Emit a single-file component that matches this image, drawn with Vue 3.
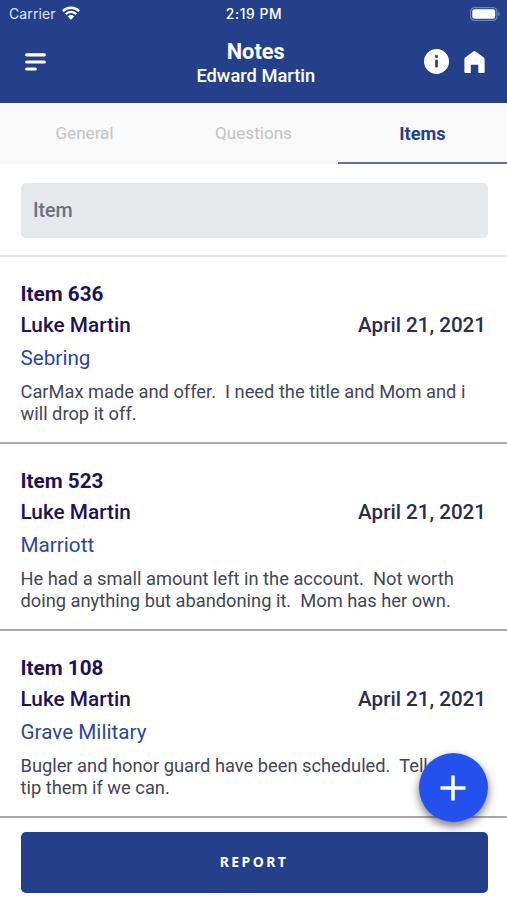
<script setup>
import { ref } from 'vue'

const tabs = ['General', 'Questions', 'Items']
const active = ref('Items')
const notes = [
  { id: 636, author: 'Luke Martin', date: 'April 21, 2021', title: 'Sebring', lines: ['CarMax made and offer.  I need the title and Mom and i', 'will drop it off.'] },
  { id: 523, author: 'Luke Martin', date: 'April 21, 2021', title: 'Marriott', lines: ['He had a small amount left in the account.  Not worth', 'doing anything but abandoning it.  Mom has her own.'] },
  { id: 108, author: 'Luke Martin', date: 'April 21, 2021', title: 'Grave Military', lines: ['Bugler and honor guard have been scheduled.  Tell me to', 'tip them if we can.'] }
]
</script>

<template>
  <div class="screen">
    <header class="header">
      <div class="status">
        <div class="carrier">
          <span>Carrier</span>
          <svg class="wifi" viewBox="0 0 18 14" width="18" height="14">
            <path d="M.8 5.1a11.7 11.7 0 0 1 16.4 0M3.7 8.1a7.5 7.5 0 0 1 10.6 0" fill="none" stroke="#fff" stroke-width="2.4" />
            <path d="M9 13.7 5.8 10.4a4.7 4.7 0 0 1 6.4 0z" fill="#fff" />
          </svg>
        </div>
        <span class="time">2:19 PM</span>
        <svg class="battery" viewBox="0 0 30 14" width="30" height="14">
          <rect x=".6" y=".6" width="26.3" height="12.8" rx="4" fill="none" stroke="#7386bb" stroke-width="1.2" />
          <rect x="2.3" y="2.3" width="22.9" height="9.4" rx="2.2" fill="#fff" />
          <path d="M28.1 4.8q1.5.6 1.5 2.2t-1.5 2.2z" fill="#7386bb" />
        </svg>
      </div>
      <div class="bar">
        <svg class="menu" viewBox="0 0 21 18" width="21" height="18">
          <path d="M1.7 1.8h17.6M1.7 9h17.6M1.7 16h8.6" stroke="#fff" stroke-width="3.2" stroke-linecap="round" />
        </svg>
        <div class="heading">
          <h1>Notes</h1>
          <p>Edward Martin</p>
        </div>
        <div class="actions">
          <svg viewBox="0 0 24 24" width="25" height="25">
            <circle cx="12" cy="12" r="12" fill="#fff" />
            <rect x="10.7" y="6" width="2.6" height="2.5" fill="#25408b" />
            <rect x="10.7" y="10.3" width="2.6" height="7.3" fill="#25408b" />
          </svg>
          <svg viewBox="0 0 21 22" width="21" height="22">
            <path d="M.4 8.2Q.4 7.2 1.2 6.6L9.4.5q1.1-.8 2.2 0l8.2 6.1q.8.6.8 1.6V21q0 1-1 1h-5.3v-8.2H6.8V22H1.4q-1 0-1-1z" fill="#fff" />
          </svg>
        </div>
      </div>
    </header>

    <nav class="tabs">
      <button v-for="tab in tabs" :key="tab" class="tab" :class="{ active: tab === active }" @click="active = tab">{{ tab }}</button>
    </nav>

    <div class="search">
      <div class="field">Item</div>
    </div>

    <main>
      <article v-for="note in notes" :key="note.id" class="note">
        <h2>Item {{ note.id }}</h2>
        <div class="meta">
          <span class="author">{{ note.author }}</span>
          <span class="date">{{ note.date }}</span>
        </div>
        <h3>{{ note.title }}</h3>
        <p v-for="line in note.lines" :key="line" class="line">{{ line }}</p>
      </article>
    </main>

    <footer class="footer">
      <button class="report">REPORT</button>
    </footer>

    <button class="fab" aria-label="Add">
      <svg viewBox="0 0 26 26" width="26" height="26">
        <path d="M13 .5v25M.5 13h25" stroke="#fff" stroke-width="3.6" />
      </svg>
    </button>
  </div>
</template>

<style>
body {
  margin: 0;
  background: #fff;
}
</style>

<style scoped>
* {
  box-sizing: border-box;
}
h1, h2, h3, p {
  margin: 0;
}
button {
  border: 0;
  padding: 0;
  font-family: inherit;
}
svg {
  display: block;
  flex: none;
}
.screen {
  position: relative;
  width: 507px;
  height: 900px;
  overflow: hidden;
  background: #fff;
  font-family: Roboto, "Liberation Sans", sans-serif;
}
.header {
  height: 103.4px;
  background: #25408b;
  color: #fff;
}
.status {
  display: grid;
  grid-template-columns: 1fr auto 1fr;
  align-items: center;
  height: 27px;
  padding: 0 7px 0 9px;
}
.carrier {
  display: flex;
  align-items: center;
  gap: 6.5px;
  font-family: Inter, sans-serif;
  font-size: 14px;
  letter-spacing: 0.1px;
  color: #dfe4f1;
}
.wifi {
  margin-top: -2px;
}
.time {
  margin-right: 1px;
  font-family: Inter, sans-serif;
  font-size: 13.8px;
  font-weight: 500;
  letter-spacing: 0.6px;
}
.battery {
  justify-self: end;
}
.bar {
  display: grid;
  grid-template-columns: 1fr auto 1fr;
  padding: 0 22px 0 25px;
}
.menu {
  margin-top: 26px;
}
.heading {
  padding: 12px 0 0 1.5px;
  text-align: center;
}
.heading h1 {
  font-size: 21.8px;
  line-height: 25px;
  font-weight: 700;
}
.heading p {
  font-size: 18.3px;
  line-height: 24px;
  font-weight: 500;
}
.actions {
  display: flex;
  justify-self: end;
  align-items: center;
  gap: 15px;
  height: 25px;
  margin-top: 22px;
}
.tabs {
  display: grid;
  grid-template-columns: repeat(3, 1fr);
  height: 61px;
  background: #f9f9f9;
}
.tab {
  padding-top: 1px;
  background: none;
  border-bottom: 2px solid transparent;
  font-size: 17.1px;
  color: #c3c3c5;
}
.tab.active {
  border-color: #5e72a9;
  font-size: 18.2px;
  font-weight: 700;
  color: #25408b;
}
.search {
  height: 92.6px;
  padding: 18.6px 19.5px 0 20.5px;
  border-bottom: 2px solid #e6e8ea;
}
.field {
  height: 55px;
  padding-left: 12.4px;
  border-radius: 5px;
  background: #e5e9ec;
  font-size: 19.7px;
  line-height: 56px;
  font-weight: 500;
  color: #6a7083;
}
.note {
  height: 187px;
  padding: 22px 21px 0 20.5px;
  border-bottom: 2px solid #aaa;
}
.note h2 {
  font-size: 20.7px;
  line-height: 31px;
  font-weight: 700;
  color: #1c1259;
}
.meta {
  display: flex;
  justify-content: space-between;
  font-size: 20.75px;
  line-height: 30px;
  font-weight: 500;
}
.author {
  color: #1c1259;
}
.date {
  font-size: 20.6px;
  color: #2b2d4d;
}
.note h3 {
  margin-top: 2px;
  font-size: 20.7px;
  line-height: 32px;
  font-weight: 400;
  color: #2d479c;
}
.line {
  font-size: 18.3px;
  line-height: 22px;
  white-space: pre;
  color: #424559;
}
.line:first-of-type {
  margin-top: 7px;
}
.footer {
  padding: 14px 19.5px 0 20.5px;
}
.report {
  display: block;
  width: 100%;
  height: 61px;
  padding-bottom: 1px;
  border-radius: 5px;
  background: #25408b;
  color: #fff;
  font-family: "Noto Sans", sans-serif;
  font-size: 14px;
  font-weight: 700;
  letter-spacing: 2.4px;
}
.fab {
  position: absolute;
  right: 19.5px;
  bottom: 78px;
  display: grid;
  place-items: center;
  width: 69px;
  height: 69px;
  border-radius: 50%;
  background: #2451ed;
  box-shadow: 0 4px 10px rgba(0, 0, 0, 0.55);
}
</style>
